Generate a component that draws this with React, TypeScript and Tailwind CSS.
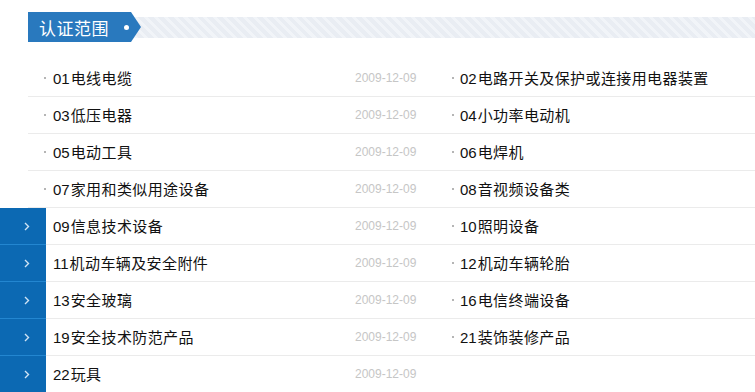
import React from 'react';

interface Row {
	left: [string, string];
	right?: [string, string];
	date: string;
	active?: boolean;
}

const rows: Row[] = [
	{ left: ['01', '电线电缆'], right: ['02', '电路开关及保护或连接用电器装置'], date: '2009-12-09' },
	{ left: ['03', '低压电器'], right: ['04', '小功率电动机'], date: '2009-12-09' },
	{ left: ['05', '电动工具'], right: ['06', '电焊机'], date: '2009-12-09' },
	{ left: ['07', '家用和类似用途设备'], right: ['08', '音视频设备类'], date: '2009-12-09' },
	{ left: ['09', '信息技术设备'], right: ['10', '照明设备'], date: '2009-12-09', active: true },
	{ left: ['11', '机动车辆及安全附件'], right: ['12', '机动车辆轮胎'], date: '2009-12-09', active: true },
	{ left: ['13', '安全玻璃'], right: ['16', '电信终端设备'], date: '2009-12-09', active: true },
	{ left: ['19', '安全技术防范产品'], right: ['21', '装饰装修产品'], date: '2009-12-09', active: true },
	{ left: ['22', '玩具'], date: '2009-12-09', active: true },
];

const font = { fontFamily: '"Liberation Sans", "Noto Sans CJK SC", sans-serif' };

const Chevron = () => (
	<svg width="6" height="9" viewBox="0 0 6 9" fill="none">
		<polyline points="1,1 4.5,4.5 1,8" stroke="#cfe3f5" strokeWidth="1.4" />
	</svg>
);

const Dot = () => <span className="w-[2px] h-[2px] bg-[#b5b5b5] shrink-0" />;

const Item = ({ code, name }: { code: string; name: string }) => (
	<span className="text-[15px] text-[#111] leading-none whitespace-nowrap">
		<span className="pr-[1px]">{code}</span>
		<span className="tracking-[0.4px]">{name}</span>
	</span>
);

const App: React.FC = () => {
	return (
		<div className="w-[755px] h-[392px] bg-white overflow-hidden" style={font}>
			{/* title bar */}
			<div className="flex items-center h-[30px] mt-[12px] ml-[28px]">
				<div className="h-[30px] w-[103px] bg-[#2979be] flex items-center pl-[11px] relative z-10">
					<span className="text-white text-[17px] leading-none tracking-[0.5px]" style={{ fontFamily: '"Noto Sans CJK SC", sans-serif' }}>
						认证范围
					</span>
					<span className="ml-auto mr-[2px] w-[5px] h-[5px] rounded-full bg-white" />
				</div>
				<svg width="10" height="30" viewBox="0 0 10 30" className="relative z-10 -mr-[12px] shrink-0">
					<polygon points="0,0 10,15 0,30" fill="#2979be" />
				</svg>
				<div className="flex-1 h-[21px] bg-[repeating-linear-gradient(45deg,#e9edf3_0px,#e9edf3_4px,#f1f4f8_4px,#f1f4f8_7px)]" />
			</div>

			{/* list */}
			<div className="mt-[18px]">
				{rows.map((row, i) => (
					<div key={i} className="flex h-[37px]">
						{row.active ? (
							<div className="w-[46px] shrink-0 bg-[#0c69b3] border-b border-[#2386d0] flex items-center pl-[24px]">
								<Chevron />
							</div>
						) : (
							<div className="w-[46px] shrink-0 flex">
								<div className="w-[28px]" />
								<div className="flex-1 border-b border-[#ebebeb] flex items-center">
									<span className="w-[2px] h-[2px] bg-[#b5b5b5] ml-auto" />
								</div>
							</div>
						)}
						<div className="flex-1 border-b border-[#ebebeb] flex items-center">
							<div className="w-[309px] pl-[7px] flex items-center">
								<Item code={row.left[0]} name={row.left[1]} />
							</div>
							<div className="w-[97px] text-[12px] text-[#c6c6c6] leading-none">{row.date}</div>
							{row.right && (
								<div className="flex items-center gap-[6px]">
									<Dot />
									<Item code={row.right[0]} name={row.right[1]} />
								</div>
							)}
						</div>
					</div>
				))}
			</div>
		</div>
	);
};

export default App;
